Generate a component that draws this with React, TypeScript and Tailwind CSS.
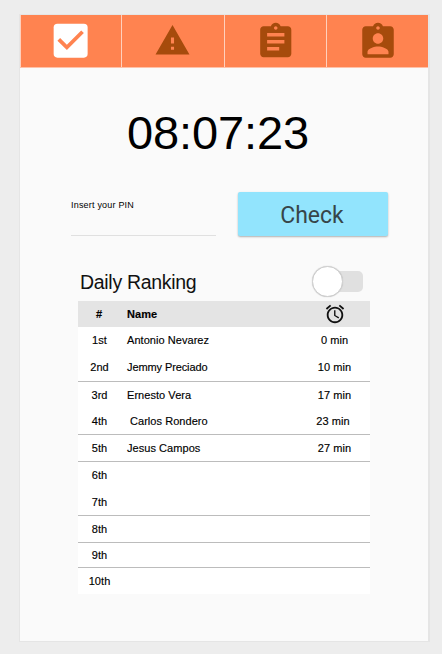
import React from "react";

type Row = { place: string; name: string; time: string; height: string; line: boolean; nameShift?: string; timeShift?: string };

const rows: Row[] = [
  { place: "1st", name: "Antonio Nevarez", time: "0 min", height: "h-[27px]", line: false },
  { place: "2nd", name: "Jemmy Preciado", time: "10 min", height: "h-[28px]", line: true, nameShift: "tracking-[-0.1px]" },
  { place: "3rd", name: "Ernesto Vera", time: "17 min", height: "h-[26px]", line: false },
  { place: "4th", name: "Carlos Rondero", time: "23 min", height: "h-[27px]", line: true, nameShift: "pl-[3px]", timeShift: "pr-[3px]" },
  { place: "5th", name: "Jesus Campos", time: "27 min", height: "h-[27px]", line: true },
  { place: "6th", name: "", time: "", height: "h-[27px]", line: false },
  { place: "7th", name: "", time: "", height: "h-[27px]", line: true },
  { place: "8th", name: "", time: "", height: "h-[27px]", line: true },
  { place: "9th", name: "", time: "", height: "h-[25px]", line: true },
  { place: "10th", name: "", time: "", height: "h-[26px]", line: false },
];

function Tabs() {
  return (
    <nav className="flex h-[53px] gap-px border-b border-[#ffc1a8] bg-[#ffd0bd] pl-px">
      <button className="flex h-[52px] w-[100px] items-start bg-[#ff8350] pt-[3px] pl-[27px]">
        <svg className="h-[45.3px] w-[45.3px] shrink-0" viewBox="0 0 24 24">
          <rect x="3" y="3" width="18" height="18" rx="2" fill="#fff" />
          <path d="M10 17l-5-5 1.41-1.41L10 14.17l7.59-7.59L19 8l-9 9z" fill="#ff8350" />
        </svg>
      </button>
      <button className="flex h-[52px] w-[102px] items-start bg-[#ff8350] pt-[7px] pl-[32px]">
        <svg className="h-[37px] w-[37px] shrink-0" viewBox="0 0 24 24" fill="#a64b0c">
          <path d="M1 21h22L12 2 1 21zm12-3h-2v-2h2v2zm0-4h-2v-4h2v4z" />
        </svg>
      </button>
      <button className="flex h-[52px] w-[101px] items-start bg-[#ff8350] pt-[6px] pl-[30px]">
        <svg className="h-[41.5px] w-[41.5px] shrink-0" viewBox="0 0 24 24" fill="#a64b0c">
          <path d="M19 3h-4.18C14.4 1.84 13.3 1 12 1c-1.3 0-2.4.84-2.82 2H5c-1.1 0-2 .9-2 2v14c0 1.1.9 2 2 2h14c1.1 0 2-.9 2-2V5c0-1.1-.9-2-2-2zm-7 0c.55 0 1 .45 1 1s-.45 1-1 1-1-.45-1-1 .45-1 1-1zm2 14H7v-2h7v2zm3-4H7v-2h10v2zm0-4H7V7h10v2z" />
        </svg>
      </button>
      <button className="flex h-[52px] flex-1 items-start bg-[#ff8350] pt-[6px] pl-[30px]">
        <svg className="h-[42px] w-[42px] shrink-0" viewBox="0 0 24 24" fill="#a64b0c">
          <path d="M19 3h-4.18C14.4 1.84 13.3 1 12 1c-1.3 0-2.4.84-2.82 2H5c-1.1 0-2 .9-2 2v14c0 1.1.9 2 2 2h14c1.1 0 2-.9 2-2V5c0-1.1-.9-2-2-2zm-7 0c.55 0 1 .45 1 1s-.45 1-1 1-1-.45-1-1 .45-1 1-1zm0 4c1.66 0 3 1.34 3 3s-1.34 3-3 3-3-1.34-3-3 1.34-3 3-3zm6 12H6v-1.4c0-2 4-3.1 6-3.1s6 1.1 6 3.1V19z" />
        </svg>
      </button>
    </nav>
  );
}

function Ranking() {
  return (
    <section className="ml-[58px] w-[292px]">
      <div className="flex h-[36px] justify-between">
        <h2 className="pt-[5px] pl-[2px] text-[19.5px] leading-6 tracking-[-0.3px] whitespace-nowrap text-[#111]">Daily Ranking</h2>
        <button className="mr-[7px] flex h-[32px] w-[51px] items-center">
          <span className="z-10 h-[31px] w-[31px] shrink-0 rounded-full border-[1.5px] border-[#cfcfcf] bg-white shadow-[0_0_1px_#bbb]" />
          <span className="-ml-[15px] h-[21px] flex-1 rounded-[5px] bg-[#e0e0e0]" />
        </button>
      </div>
      <div className="bg-white text-[11px] tracking-[0.05px] text-black [-webkit-text-stroke:0.15px_black]">
        <div className="flex h-[26px] items-center bg-[#e4e4e4] font-bold">
          <span className="w-[42px] text-center">#</span>
          <span className="flex-1 pl-[7px]">Name</span>
          <span className="flex w-[71px] pl-[25px]">
            <svg className="h-[22px] w-[22px]" viewBox="0 0 24 24" fill="#111">
              <path d="M22 5.72l-4.6-3.86-1.29 1.53 4.6 3.86L22 5.72zM7.88 3.39L6.6 1.86 2 5.71l1.29 1.53 4.59-3.85zM12.5 8H11v6l4.75 2.85.75-1.23-4-2.37V8zM12 4c-4.97 0-9 4.03-9 9s4.02 9 9 9c4.97 0 9-4.03 9-9s-4.03-9-9-9zm0 16c-3.87 0-7-3.13-7-7s3.13-7 7-7 7 3.13 7 7-3.13 7-7 7z" />
            </svg>
          </span>
        </div>
        {rows.map((r) => (
          <div key={r.place} className={`flex items-center ${r.height} ${r.line ? "border-b border-[#bcbcbc]" : ""}`}>
            <span className="w-[42px] pl-px text-center">{r.place}</span>
            <span className="flex-1 pl-[7px]"><span className={r.nameShift}>{r.name}</span></span>
            <span className={`w-[71px] text-center ${r.timeShift ?? ""}`}>{r.time}</span>
          </div>
        ))}
      </div>
    </section>
  );
}

export default function App() {
  return (
    <div className="h-[654px] w-[442px] overflow-hidden bg-[#ededed] pt-[14px] pl-[19px] font-['Liberation_Sans',Arial,sans-serif]">
      <main className="h-[628px] w-[411px] border border-r-2 border-[#e5e5e5] bg-[#fafafa]">
        <Tabs />
        <div className="mt-[38px] ml-[107px] h-[54px] text-[47px] leading-[54px] tracking-[-0.1px] whitespace-nowrap text-black">08:07:23</div>
        <div className="mt-[32px] flex h-[45px]">
          <label className="ml-[51px] h-[44px] w-[145px] border-b border-[#e0e0e0] pt-[7px] text-[9px] leading-3 tracking-[0.2px] text-black">Insert your PIN</label>
          <button className="ml-[22px] h-[44px] w-[150px] rounded-[2px] bg-[#92e4fd] pt-[5px] pr-[2px] font-['Roboto',sans-serif] text-[23px] text-[#374549] shadow-[0_1px_2px_rgba(0,0,0,0.3)]">Check</button>
        </div>
        <div className="h-[28px]" />
        <Ranking />
      </main>
    </div>
  );
}
